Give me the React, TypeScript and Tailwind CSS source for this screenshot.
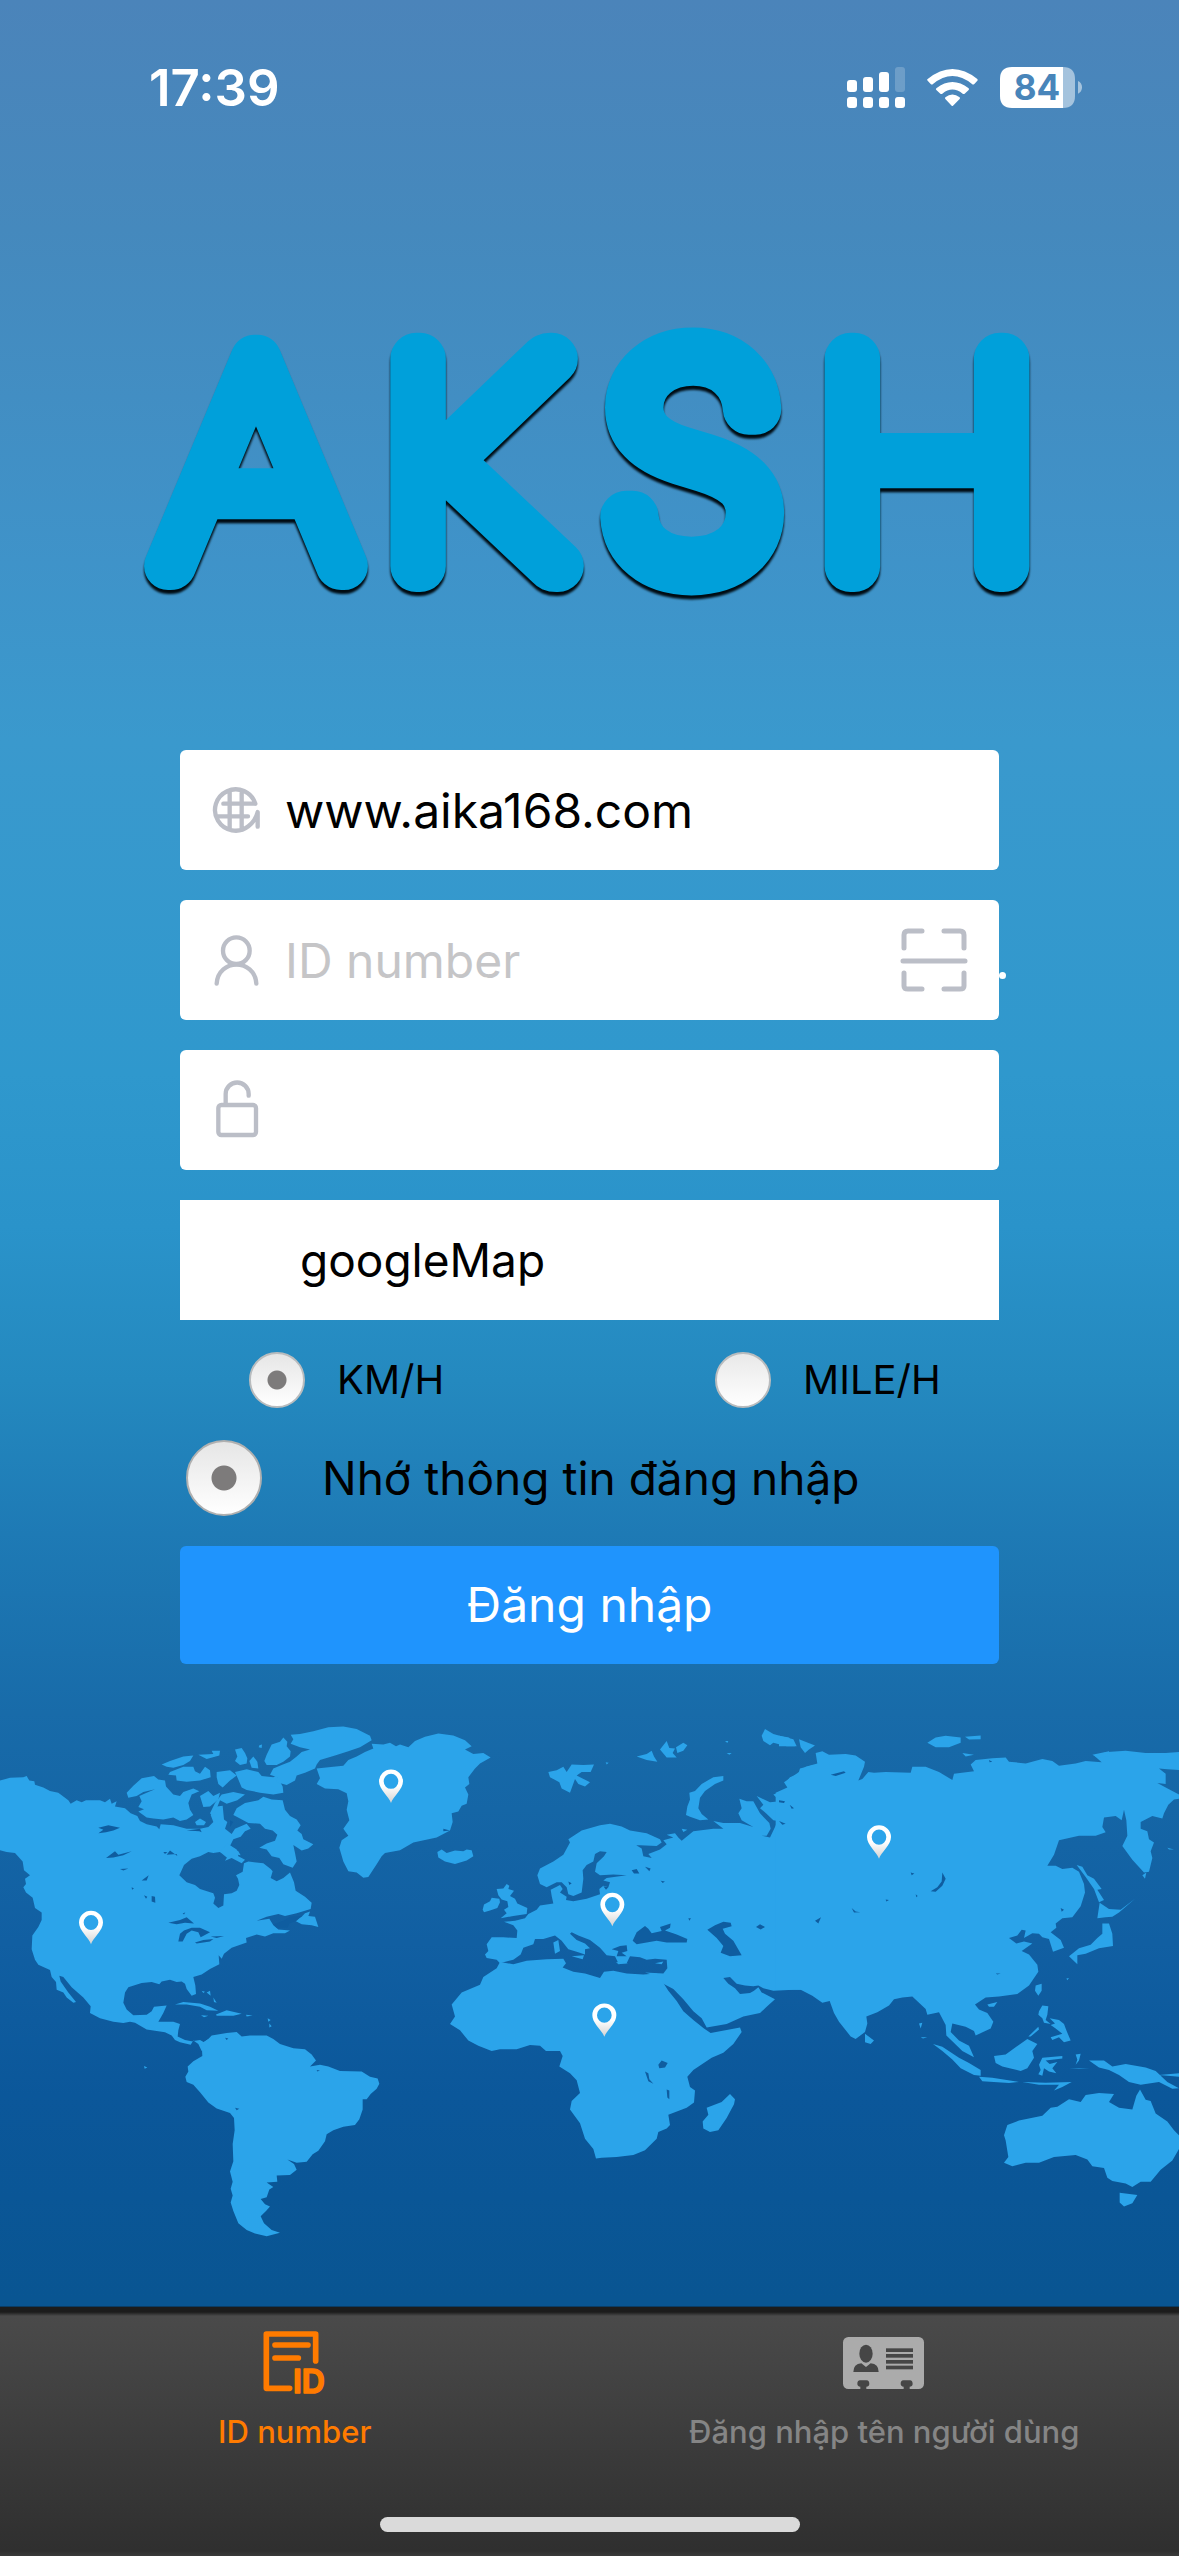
import { useState } from "react";
import type { ReactNode } from "react";

const AMERICAS = [
  // North America
  "M0 205L30 197L70 195L80 192L88 205L103 207L105 217L130 225L150 235L175 240L205 262L212 272L230 262L245 268L258 262L300 262L315 268L330 258L335 272L350 265L345 280L375 285L392 300L412 308L420 322L440 332L470 338L478 346L482 332L520 335L560 345L600 345L625 340L640 325L632 305L650 280L668 278L672 318L682 325L675 345L695 360L705 345L740 330L752 345L735 352L722 368L700 375L690 395L715 410L722 422L700 418L682 430L660 412L640 415L625 412L600 425L575 432L552 450L545 465L538 480L560 500L585 508L600 520L640 532L645 545L640 562L655 575L670 568L672 535L695 532L710 525L718 508L714 490L708 480L728 470L732 445L745 440L790 445L812 462L818 468L812 488L830 497L850 488L870 472L882 500L887 525L915 542L935 560L932 578L890 590L855 598L835 592L800 600L770 612L808 606L820 625L835 637L870 640L855 648L820 648L795 658L770 652L738 662L740 675L695 690L672 708L665 722L656 712L658 738L630 752L605 768L580 775L586 800L588 825L575 830L560 810L555 795L545 788L530 790L510 783L485 788L478 796L455 790L425 793L385 805L375 820L370 850L380 870L400 886L440 885L455 875L462 862L500 858L490 880L475 905L520 905L540 912L535 930L533 948L555 958L575 962L600 958L612 965L640 945L605 990L595 970L580 960L572 972L540 965L525 958L515 945L495 936L440 928L405 908L390 905L370 909L340 905L300 895L270 880L272 860L250 835L215 805L190 775L178 772L182 788L205 820L228 848L220 850L200 835L190 820L170 812L168 790L155 775L150 755L115 740L105 725L95 695L97 655L115 630L125 610L125 588L105 575L98 545L78 530L70 515L78 505L75 490L90 480L72 465L68 440L45 415L20 412L0 407Z",
  // Arctic archipelago
  "M380 240L400 220L425 198L462 192L475 202L495 205L498 222L520 245L540 250L550 238L580 228L598 236L575 245L565 270L570 290L580 305L560 318L540 322L520 312L490 318L460 315L440 312L415 295L432 288L415 282L425 265L418 250L440 240L465 230L430 238L410 250L385 255Z",
  "M485 158L510 148L550 135L580 132L570 148L550 160L520 168L500 165ZM510 180L550 165L580 165L585 178L600 185L615 165L630 175L632 195L600 205L560 208L530 205L528 190L505 188ZM600 250L625 235L640 250L660 240L655 260L630 280L610 282ZM595 130L640 128L635 118L660 118L658 132L620 142ZM650 180L690 175L710 190L690 205L668 225L655 215L650 195Z",
  "M705 115L725 110L735 125L742 140L740 155L720 160L705 148L712 135ZM748 148L760 135L772 150L775 170L755 168ZM705 180L740 172L775 180L785 192L820 195L830 190L848 222L850 240L820 245L780 240L740 232L725 225L715 202ZM665 245L700 238L735 245L712 262L680 272L660 262L640 310L630 300L645 270Z",
  "M800 130L815 100L840 92L850 80L862 92L860 105L872 120L870 135L850 150L830 160L800 160L793 148ZM872 72L900 70L940 62L985 50L1030 48L1070 55L1110 75L1115 88L1080 108L1045 120L1005 132L960 145L950 158L945 170L915 182L890 190L885 205L860 218L830 210L832 195L810 188L820 170L845 160L870 150L890 135L905 122L930 115L900 108L872 98L880 85Z",
  "M700 305L710 285L735 270L775 262L790 252L815 260L848 262L855 290L870 308L890 318L902 335L892 350L905 360L910 375L940 390L925 402L905 408L880 392L885 415L890 440L878 458L850 448L838 430L815 425L800 405L778 400L800 388L825 380L832 362L818 350L795 345L780 330L745 328L720 315ZM660 412L682 388L710 405L715 425L735 435L725 445L695 430L675 438L685 422Z",
  "M585 325L600 315L618 325L612 335L590 335ZM885 612L905 600L915 590L930 585L925 598L945 600L955 630L935 625L905 622ZM778 102L786 100L785 110L776 108Z",
  // Caribbean
  "M525 855L550 848L600 852L630 862L655 873L620 872L600 862L560 855ZM648 884L680 872L725 882L700 888L650 888ZM603 886L625 888L612 892ZM738 885L758 887L740 890ZM605 815L615 818L610 822ZM620 820L630 815L632 830ZM640 835L650 850L642 848ZM803 895L812 900L805 905ZM808 910L815 918L808 922ZM432 1034L442 1038L434 1042Z",
  // South America
  "M605 968L625 955L635 945L680 938L710 935L725 948L750 945L800 945L820 955L840 970L880 982L915 985L935 1000L948 1018L930 1035L960 1030L985 1035L1020 1048L1085 1050L1110 1065L1133 1070L1138 1085L1130 1100L1112 1115L1100 1130L1088 1130L1088 1160L1078 1188L1065 1205L1030 1210L1000 1220L980 1232L975 1252L955 1280L938 1290L920 1312L890 1315L862 1305L882 1318L890 1335L870 1350L830 1352L832 1370L800 1372L820 1385L808 1392L800 1415L782 1420L795 1435L810 1442L798 1455L782 1470L792 1490L815 1510L840 1518L800 1528L765 1520L740 1510L715 1490L700 1455L692 1430L698 1410L692 1390L698 1370L690 1340L700 1310L698 1260L704 1220L702 1185L690 1170L650 1157L625 1140L600 1110L580 1088L560 1080L556 1065L565 1050L563 1035L580 1020L607 1005Z",
  // Greenland
  "M950 170L1000 165L1030 162L1045 145L1070 135L1095 122L1120 112L1115 98L1150 100L1170 95L1188 105L1200 100L1225 108L1245 90L1275 78L1315 68L1360 74L1395 88L1415 105L1395 115L1420 128L1450 125L1472 138L1440 155L1425 170L1405 195L1408 215L1395 225L1405 245L1400 272L1385 278L1375 295L1355 300L1358 325L1350 350L1310 370L1240 385L1200 407L1155 415L1145 425L1130 448L1105 485L1090 487L1070 472L1045 468L1030 440L1018 400L1025 378L1045 365L1030 345L1048 320L1040 290L1045 265L1040 242L1015 230L975 228L950 215L960 198Z",
];

const AMERICA_WATER = [
  "M295 342L325 335L360 342L340 350L318 355L295 358L310 348ZM318 430L345 410L355 420L395 410L370 422L340 428ZM505 618L540 610L560 602L582 620L555 618L530 622ZM535 672L540 650L552 640L575 632L600 632L630 645L612 655L602 660L595 645L575 640L560 650L548 672ZM585 675L610 668L640 665L630 672L590 678ZM632 658L672 656L650 662ZM455 540L465 542L466 560L455 556ZM432 538L442 542L438 548ZM425 495L446 480L440 495ZM360 462L385 460L370 466ZM395 515L402 518L396 522ZM490 412L502 412L495 418ZM675 952L685 954L680 958ZM820 622L850 612L870 600L905 598L890 612L868 620L862 632L830 632ZM705 1155L718 1158L710 1162ZM950 1045L960 1047L952 1050ZM1330 345L1350 350L1330 352ZM548 590L556 588L552 594Z",
  "M690 320L700 325L690 340ZM560 350L600 345L605 355L598 352ZM510 408L500 420L530 418L532 424Z",
];

const EUROPE_AFRICA = [
  // Iceland, Svalbard and the British Isles
  "M112 412L125 405L140 415L165 408L190 410L200 405L215 407L220 425L200 437L165 447L135 440L115 428ZM445 180L470 175L490 165L500 180L515 158L550 160L582 158L572 180L545 180L530 190L570 210L555 222L535 215L525 200L510 240L485 228L478 210L450 195Z",
  "M290 520L310 518L320 505L328 510L325 520L342 525L330 540L345 548L352 562L382 575L380 592L340 598L302 605L320 590L312 580L325 572L322 555L305 550L295 538ZM248 580L252 565L270 555L275 545L298 548L300 558L292 575L270 582L252 587Z",
  "M710 135L740 128L755 118L762 135L772 150L740 145ZM780 115L800 90L808 110L825 112L818 125L830 138L800 138ZM828 108L850 95L862 102L850 118L832 125ZM1085 75L1095 55L1120 70L1150 78L1180 85L1190 105L1160 105L1120 95L1110 102L1090 90ZM975 90L985 90L982 96ZM980 125L995 125L988 130ZM617 152L626 153L620 158Z",
  // Novaya Zemlya
  "M858 305L862 280L870 260L868 240L885 235L905 215L940 195L970 192L970 205L945 215L915 235L900 255L895 285L905 302L925 318L900 320L870 310Z",
  // Europe and western Asia
  "M260 680L275 660L310 660L350 662L352 640L340 625L312 615L345 612L375 605L385 592L410 580L420 568L460 562L455 540L452 522L480 508L488 520L480 530L500 542L498 552L520 555L560 548L600 535L598 520L610 510L625 515L630 500L610 495L620 488L680 480L640 478L600 480L585 470L590 445L612 425L620 412L600 410L585 418L580 440L560 450L548 465L550 490L545 530L520 540L505 535L500 515L485 500L470 500L440 515L420 505L412 480L420 460L460 440L490 420L510 385L505 375L545 350L600 335L630 330L665 338L690 350L740 358L780 375L785 385L770 395L705 392L695 385L725 402L730 425L755 430L745 418L780 405L800 390L790 378L820 370L800 362L825 358L835 370L845 380L880 352L940 345L970 345L940 322L970 328L1020 328L1060 340L1025 320L1015 300L1025 285L1018 258L1040 265L1060 265L1080 300L1108 328L1112 345L1100 365L1085 365L1110 370L1125 340L1130 328L1155 325L1120 320L1098 300L1080 285L1090 275L1070 250L1110 268L1140 265L1120 245L1160 232L1180 230L1155 212L1170 195L1195 185L1200 170L1240 160L1240 812L1180 812L1120 815L1090 808L1075 800L1060 802L1035 800L1010 795L990 775L970 778L985 795L1005 808L1020 825L1050 822L1062 815L1075 805L1085 820L1125 840L1100 862L1080 880L1030 890L980 912L920 922L905 895L880 875L850 840L820 810L790 795L770 790L755 768L735 762L790 765L802 750L800 725L765 722L740 725L720 718L690 715L680 735L655 735L645 715L620 712L600 690L570 668L535 655L515 645L510 650L530 668L555 678L570 692L555 695L555 710L530 702L505 695L485 670L465 655L430 665L405 665L400 680L370 690L362 710L340 725L300 735L290 725L260 720L255 710L265 700Z",
  "M460 675L475 668L480 700L465 708ZM515 715L552 712L548 724ZM648 732L685 735L655 738ZM765 735L790 730L785 738ZM845 345L862 348L850 354Z",
  // Africa
  "M300 732L340 738L380 728L440 724L490 722L498 735L488 748L520 760L555 765L600 778L612 760L640 757L680 765L730 768L770 765L785 785L805 815L830 845L850 875L880 900L912 925L932 938L1020 922L1025 935L1000 970L970 995L935 1010L880 1045L862 1065L870 1095L885 1105L882 1140L860 1155L805 1175L810 1205L800 1215L775 1225L770 1245L735 1278L700 1292L650 1298L605 1300L588 1302L580 1275L555 1245L540 1200L510 1160L515 1135L540 1112L530 1075L510 1055L478 1035L488 1005L480 990L438 990L420 975L390 973L350 985L300 985L275 990L235 975L205 960L180 930L150 912L165 890L155 855L185 820L240 798L250 775L290 750Z",
  // Madagascar
  "M990 1115L1005 1130L1002 1145L980 1185L955 1220L930 1225L910 1215L908 1195L925 1175L920 1155L965 1138Z",
];

const EUROPE_WATER = [
  "M698 670L710 645L735 627L745 635L755 648L785 642L780 630L812 620L810 632L795 640L830 652L862 665L860 675L800 675L770 670L740 675L710 680ZM922 638L945 625L970 615L992 618L995 628L968 635L975 650L1000 670L1025 712L990 715L962 705L970 685L950 662ZM1068 630L1080 622L1095 630L1082 637ZM635 695L660 685L680 683L682 700L665 705L680 715L650 715L655 700ZM695 465L710 462L718 475L702 475ZM735 455L752 460L748 468ZM775 1030L785 1018L803 1025L795 1038L778 1040ZM735 1050L745 1055L748 1072L760 1085L745 1078ZM800 1102L808 1105L808 1130L802 1125ZM865 605L873 605L868 612ZM782 496L795 498L788 502ZM610 512L625 515L618 522ZM505 498L515 503L508 508Z",
];

const ASIA = [
  // Mainland
  "M-10 240L25 225L15 210L60 180L80 165L115 155L110 125L130 120L150 130L200 128L230 132L258 150L255 165L238 205L250 200L268 180L285 182L320 180L395 182L400 165L440 165L480 180L520 203L525 185L585 178L575 158L590 145L640 140L680 138L690 150L740 155L790 142L820 148L840 162L890 155L920 148L968 152L945 132L985 122L1040 118L1100 125L1200 125L1210 175L1165 172L1140 170L1160 185L1160 215L1135 212L1170 230L1200 245L1200 258L1185 260L1168 275L1155 300L1150 315L1120 308L1085 325L1085 345L1105 352L1110 375L1125 385L1115 410L1120 430L1110 470L1095 472L1060 435L1030 395L1045 365L1042 320L1035 290L1028 320L1010 308L975 312L970 340L980 355L950 365L900 365L840 378L825 420L805 452L830 452L850 462L880 458L900 470L915 505L918 530L905 570L880 602L850 605L830 620L832 632L815 645L845 668L855 690L822 702L810 665L790 660L780 650L760 648L735 662L740 640L728 638L715 655L690 662L712 678L735 672L760 678L728 700L750 710L775 740L778 760L750 800L715 825L660 832L620 835L588 855L600 870L625 880L643 905L635 925L590 945L585 932L560 920L520 910L515 935L540 960L570 975L585 1008L550 990L520 962L502 945L500 915L480 878L445 885L440 868L400 832L370 835L345 840L330 858L295 878L262 890L265 910L258 935L230 955L215 948L180 905L165 880L152 845L130 850L100 830L65 812L-10 812Z",
  "M258 940L285 960L275 970L258 965ZM0 75L30 80L48 105L0 105ZM60 85L108 103L90 115L78 125L65 108ZM445 95L470 80L500 75L545 80L545 95L510 108L470 108ZM558 78L605 74L605 85L570 86ZM550 125L585 130L560 135ZM940 130L990 120L990 135L955 138ZM1160 125L1200 122L1200 160Z",
  // Japan, Sakhalin and Taiwan
  "M893 450L910 455L925 480L945 490L968 520L955 522L975 552L960 558L945 520L920 485ZM962 560L990 578L1025 580L1068 548L1020 588L1000 600L980 602L955 605ZM970 620L990 620L1000 650L1002 685L960 692L920 708L895 712L895 738L870 715L900 692L935 682L955 662L970 650ZM770 800L788 795L788 815L778 830L768 815ZM1090 480L1102 472L1098 490ZM1165 400L1185 405L1170 405ZM862 780L870 778L865 785Z",
  // Hainan, the Philippines and Indonesia
  "M625 855L655 848L645 862L630 862ZM780 875L790 858L808 860L805 885L800 900L815 912L795 908L790 895L778 885ZM812 895L840 900L855 912L862 930L875 960L855 965L840 950L820 958L815 950L850 940L830 925L815 915L828 910ZM748 948L778 920L780 928L755 948Z",
  "M462 970L490 978L540 1010L570 1025L605 1045L605 1062L585 1060L545 1040L520 1015L490 990ZM600 1065L640 1068L720 1080L690 1083L610 1078ZM645 1005L680 1000L745 955L775 970L760 990L765 1010L745 1040L725 1048L670 1035L650 1025ZM780 1030L790 1010L850 1005L850 1012L800 1018L812 1028L835 1022L820 1040L832 1055L810 1050L795 1040L790 1062L778 1058L785 1045ZM730 1080L800 1082L878 1080L850 1095L825 1105L840 1088L780 1088ZM890 1000L905 998L900 1018L890 1030L895 1015ZM870 1042L932 1042L900 1040Z",
  "M930 1018L975 1018L1000 1035L1040 1028L1100 1038L1130 1048L1165 1080L1200 1098L1180 1100L1140 1080L1085 1088L1050 1080L1020 1060L990 1045L960 1038ZM1140 1060L1200 1055L1200 1065ZM420 910L430 908L425 925ZM425 950L445 950L432 954Z",
  // Australia and Tasmania
  "M685 1205L720 1192L790 1178L815 1155L835 1152L870 1130L905 1138L920 1118L960 1112L1005 1115L990 1138L1020 1155L1060 1160L1072 1120L1083 1102L1100 1132L1115 1135L1130 1172L1165 1195L1185 1220L1200 1235L1200 1275L1180 1308L1145 1335L1115 1370L1085 1370L1060 1385L1040 1375L1000 1368L985 1358L975 1330L940 1325L925 1305L890 1292L825 1298L780 1315L740 1315L700 1325L675 1315L688 1298L680 1250L675 1235ZM1022 1402L1075 1408L1060 1432L1035 1442L1022 1430Z",
];

const ASIA_WATER = [
  "M490 472L500 490L490 510L470 528L455 526L475 515L488 498ZM108 612L126 602L118 620ZM218 575L230 585L244 587L225 588ZM320 550L330 552L322 556ZM395 472L406 475L398 480ZM0 262L18 265L15 270L0 268ZM32 275L45 285L38 287ZM0 322L20 330L10 333ZM155 188L195 178L200 182L170 192ZM845 575L855 580L848 586ZM410 535L416 540L412 544ZM650 765L665 765L655 768ZM630 145L640 150L632 152Z",
];

const PINS = [
  { x: 273, y: 617 },
  { x: 1173, y: 207 },
  { x: 1837, y: 565 },
  { x: 1813, y: 886 },
  { x: 2637, y: 369 },
];

function WorldMap() {
  return (
    <svg viewBox="0 0 3537 1568" preserveAspectRatio="none" className="block aspect-[1179/540] w-full" aria-hidden="true">
      <defs>
        <linearGradient id="pin" x1="0" y1="0" x2="0" y2="1">
          <stop offset="0.5" stopColor="#fff" />
          <stop offset="1" stopColor="#d2d2d2" />
        </linearGradient>
      </defs>
      <g fill="#2ba4ea">
        {AMERICAS.map((d) => (
          <path key={d} d={d} />
        ))}
        <g transform="translate(1200 0)">
          {EUROPE_AFRICA.map((d) => (
            <path key={d} d={d} />
          ))}
        </g>
        <g transform="translate(2337 0)">
          {ASIA.map((d) => (
            <path key={d} d={d} />
          ))}
        </g>
      </g>
      <g fill="#0f5da0">
        {AMERICA_WATER.map((d) => (
          <path key={d} d={d} />
        ))}
        <g transform="translate(1200 0)">
          {EUROPE_WATER.map((d) => (
            <path key={d} d={d} />
          ))}
        </g>
        <g transform="translate(2337 0)">
          {ASIA_WATER.map((d) => (
            <path key={d} d={d} />
          ))}
        </g>
      </g>
      {PINS.map((p) => (
        <path
          key={p.x}
          transform={`translate(${p.x} ${p.y})`}
          fill="url(#pin)"
          fillRule="evenodd"
          d="M0 63C-6 44 -36 24 -36 0A36 34 0 1 1 36 0C36 24 6 44 0 63ZM-22 0A22 22 0 1 0 22 0A22 22 0 1 0 -22 0Z"
        />
      ))}
    </svg>
  );
}

function StatusBar() {
  return (
    <div className="flex h-[175px] items-start justify-between pr-[96px] pl-[149px] text-white">
      <time className="mt-[58px] text-[51px] leading-[60px] font-semibold">17:39</time>
      <svg viewBox="78 51 708 123" className="mt-[67px] h-[41px] w-[236px]" fill="#fff" role="img" aria-label="Signal, Wi-Fi, battery 84%">
        <rect x="78" y="90" width="30" height="36" rx="9" />
        <rect x="126" y="81" width="30" height="45" rx="9" />
        <rect x="174" y="66" width="30" height="60" rx="9" />
        <rect x="222" y="51" width="30" height="75" rx="9" opacity="0.2" />
        <rect x="78" y="141" width="30" height="33" rx="9" />
        <rect x="126" y="141" width="30" height="33" rx="9" />
        <rect x="174" y="141" width="30" height="33" rx="9" />
        <rect x="222" y="141" width="30" height="33" rx="9" />
        <path d="M320 87Q394 27 469 87Q471 90 469 92L460 102Q456 105 453 102Q394 54 336 102Q333 105 329 102L320 92Q317 89 320 87Z" />
        <path d="M346 115Q394 77 443 115Q445 118 443 120L431 131Q428 133 425 131Q394 106 364 131Q361 133 358 131L346 120Q343 118 346 115Z" />
        <path d="M373 142Q394 125 416 142Q418 145 416 147L396 167Q394 169 392 167L373 147Q371 145 373 142Z" />
        <path d="M573 51H726V174H573Q537 174 537 138V87Q537 51 573 51Z" />
        <path d="M726 51Q762 51 762 87V138Q762 174 726 174Z" opacity="0.5" />
        <path d="M771 93Q783 98 783 112Q783 126 771 131Z" opacity="0.5" />
        <text x="648" y="150" textAnchor="middle" fill="#4885ba" className="text-[105px] font-bold">
          84
        </text>
      </svg>
    </div>
  );
}

function Logo() {
  return (
    <svg viewBox="0 0 940 310" className="mx-auto block h-auto w-full max-w-[940px] overflow-visible" role="img" aria-label="AKSH">
      <g fill="#00a0da" stroke="#00a0da" strokeWidth="52" strokeLinejoin="round" strokeLinecap="round" className="text-[296px] drop-shadow-[0_4px_1px_#000b12]">
        <text x="136" y="256" textAnchor="middle" strokeWidth="48" className="font-['Lato'] font-thin">
          A
        </text>
        <text x="262" y="256" className="font-['Lato'] font-thin">
          K
        </text>
        <text x="484" y="256" className="text-[288px] font-thin">
          S
        </text>
        <text x="807" y="256" textAnchor="middle" className="font-['Lato'] font-thin">
          H
        </text>
      </g>
    </svg>
  );
}

const iconProps = {
  className: "size-[70px] shrink-0",
  fill: "none",
  stroke: "#bbbec7",
  strokeWidth: 13,
  strokeLinecap: "round" as const,
  strokeLinejoin: "round" as const,
  "aria-hidden": true,
};

function GlobeIcon() {
  return (
    <svg viewBox="0 -15 210 210" {...iconProps}>
      <path d="M151 71A62 62 0 1 0 130 139Q152 122 158 96V140M55 71H151M37 109H129M74 32V149M110 32V149" />
    </svg>
  );
}

function PersonIcon() {
  return (
    <svg viewBox="0 435 210 210" {...iconProps}>
      <circle cx="94" cy="512" r="40" />
      <path d="M35 611C40 535 149 535 154 611" />
    </svg>
  );
}

function LockIcon() {
  return (
    <svg viewBox="0 885 210 210" {...iconProps}>
      <rect x="40" y="975" width="113" height="90" rx="9" />
      <path d="M62 973V942A34 34 0 0 1 131 942V947" />
    </svg>
  );
}

function ScanIcon() {
  return (
    <svg viewBox="0 0 68 64" className="h-[64px] w-[68px]" fill="none" stroke="#bbbec7" strokeWidth="5" strokeLinecap="round" strokeLinejoin="round" aria-hidden="true">
      <path d="M22 3H8Q4 3 4 7V20M44 3H60Q64 3 64 7V20M4 45V58Q4 61 8 61H22M44 61H60Q64 61 64 58V45M3 33H65" />
    </svg>
  );
}

function Field({ icon, children }: { icon: ReactNode; children: ReactNode }) {
  return (
    <div className="relative flex h-[120px] items-center gap-[10px] rounded-[6px] bg-white pr-[31px] pl-[25px]">
      {icon}
      {children}
    </div>
  );
}

const inputClass = "h-full min-w-0 flex-1 bg-transparent text-[48px] text-black outline-none placeholder:text-[#c5c5c7]";

function LoginForm() {
  const [unit, setUnit] = useState("kmh");
  const [remember, setRemember] = useState(true);
  const radioClass =
    "size-[56px] shrink-0 appearance-none rounded-full border-2 border-[#b9bcbe] bg-linear-to-b from-[#e9e9e9] to-white checked:bg-[radial-gradient(circle,#7d7b7b_0_9px,transparent_10px),linear-gradient(#e6e6e6,#ffffff)]";

  return (
    <form className="mx-auto flex w-full max-w-[819px] flex-col" onSubmit={(e) => e.preventDefault()}>
      <div className="flex flex-col gap-[30px]">
        <Field icon={<GlobeIcon />}>
          <input aria-label="Server" defaultValue="www.aika168.com" className={inputClass} />
        </Field>
        <Field icon={<PersonIcon />}>
          <input aria-label="ID number" placeholder="ID number" className={inputClass} />
          <button type="button" aria-label="Scan code">
            <ScanIcon />
          </button>
          <span className="absolute top-[72px] -right-[7px] size-[7px] rounded-full bg-white" />
        </Field>
        <Field icon={<LockIcon />}>
          <input type="password" aria-label="Password" className={inputClass} />
        </Field>
        <select aria-label="Map" className="h-[120px] appearance-none bg-white pl-[120px] text-[46px] text-black outline-none">
          <option>googleMap</option>
        </select>
      </div>
      <div className="grid h-[120px] grid-cols-[466px_1fr] items-center pl-[69px] text-[40px] text-black">
        <label className="flex items-center gap-[32px]">
          <input type="radio" name="unit" className={radioClass} checked={unit === "kmh"} onChange={() => setUnit("kmh")} />
          KM/H
        </label>
        <label className="flex items-center gap-[32px]">
          <input type="radio" name="unit" className={radioClass} checked={unit === "mileh"} onChange={() => setUnit("mileh")} />
          MILE/H
        </label>
      </div>
      <label className="flex h-[76px] items-center gap-[60px] pl-[6px] text-[46px] text-black">
        <input
          type="checkbox"
          checked={remember}
          onChange={() => setRemember(!remember)}
          className="size-[76px] shrink-0 appearance-none rounded-full border-2 border-[#b0b0b0] bg-linear-to-b from-[#e9e9e9] to-white checked:bg-[radial-gradient(circle,#7d7b7b_0_12px,transparent_13px),linear-gradient(#e6e6e6,#ffffff)]"
        />
        Nhớ thông tin đăng nhập
      </label>
      <button type="submit" className="mt-[30px] h-[118px] rounded-[6px] bg-[#1f94fd] text-[48px] text-white">
        Đăng nhập
      </button>
    </form>
  );
}

function IdDocumentIcon() {
  return (
    <svg viewBox="0 0 270 270" className="size-[90px]" fill="none" stroke="#ff7b00" strokeWidth="17" strokeLinecap="round" strokeLinejoin="round" aria-hidden="true">
      <path d="M197 138V57H49V220H119M75 90H174M75 129H145" />
      <text x="129" y="235" fill="#ff7b00" strokeWidth="5" className="text-[96px] font-semibold">
        ID
      </text>
    </svg>
  );
}

function IdCardIcon() {
  return (
    <svg viewBox="0 0 300 225" className="h-[75px] w-[100px]" aria-hidden="true">
      <rect x="27" y="36" width="243" height="156" rx="16" fill="#ababab" />
      <g fill="#464646">
        <ellipse cx="96" cy="86" rx="20" ry="27" />
        <path d="M58 141Q58 117 82 115L96 126L110 115Q134 117 134 141Z" />
        <rect x="156" y="70" width="81" height="11" />
        <rect x="156" y="87" width="81" height="11" />
        <rect x="156" y="105" width="81" height="11" />
        <rect x="156" y="122" width="81" height="11" />
        <path d="M78 166H98Q106 167 106 177Q105 185 97 185V192H79V185Q70 184 70 176Q70 167 78 166ZM208 166H228Q236 167 236 177Q235 185 227 185V192H209V185Q200 184 200 176Q200 167 208 166Z" />
      </g>
    </svg>
  );
}

function TabBar() {
  return (
    <nav className="flex h-[250px] flex-col items-center justify-between border-t border-[#0b3c64] bg-[linear-gradient(#1c1c1c_0_5px,#4a4a4a_9px,#2f2f2f_98%,#3a3a3a)] pb-[24px]">
      <div className="grid w-full grid-cols-2">
        <button type="button" className="flex flex-col items-center pt-[8px] text-[#ff7b00]">
          <IdDocumentIcon />
          <span className="mt-[7px] text-[31px] leading-[40px] font-medium">ID number</span>
        </button>
        <button type="button" className="flex flex-col items-center pt-[18px] text-[#858585]">
          <IdCardIcon />
          <span className="mt-[12px] text-[31px] leading-[40px] font-medium">Đăng nhập tên người dùng</span>
        </button>
      </div>
      <div className="h-[15px] w-[420px] rounded-full bg-[#dadada]" />
    </nav>
  );
}

export default function App() {
  return (
    <div className="flex min-h-screen flex-col bg-[linear-gradient(#4b84ba_0%,#4589bd_9%,#3f93c9_22%,#3a99cd_29%,#2f98cd_42%,#2a93ca_48%,#2489bf_54%,#1e7ab5_60%,#186ba9_67%,#115fa2_76%,#0b579a_82%,#095592_90%)] font-[Inter,'Open_Sans',sans-serif]">
      <StatusBar />
      <main className="flex flex-1 flex-col">
        <div className="pt-[135px] pb-[130px]">
          <Logo />
        </div>
        <LoginForm />
        <div className="mt-auto pb-[56px]">
          <WorldMap />
        </div>
      </main>
      <TabBar />
    </div>
  );
}
